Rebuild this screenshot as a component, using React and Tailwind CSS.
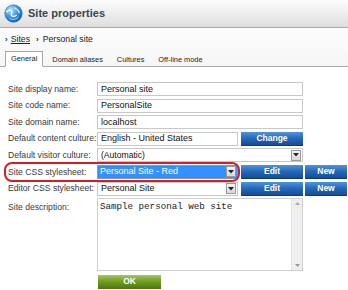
import React from "react";

const F = { fontFamily: "Arial, 'Liberation Sans', sans-serif" };

function Globe() {
  return (
    <svg width="19" height="19" viewBox="0 0 20 20">
      <defs>
        <radialGradient id="g" cx="35%" cy="30%" r="75%">
          <stop offset="0%" stopColor="#bfe6ff" />
          <stop offset="50%" stopColor="#3d9be6" />
          <stop offset="100%" stopColor="#125eb0" />
        </radialGradient>
      </defs>
      <circle cx="10" cy="10" r="9.2" fill="url(#g)" stroke="#2a6fb8" strokeWidth="0.6" />
      <path d="M3 8 C6 5, 9 7, 8 10 C7 13, 10 14, 13 12" stroke="#fff" strokeWidth="1.6" fill="none" strokeLinecap="round" opacity="0.9" />
      <path d="M11 4 C13 5, 15 6, 16 9" stroke="#fff" strokeWidth="1.3" fill="none" strokeLinecap="round" opacity="0.85" />
      <path d="M6 15 C8 17, 12 17, 15 14" stroke="#e8f6ff" strokeWidth="1" fill="none" strokeLinecap="round" opacity="0.7" />
    </svg>
  );
}

function Arrow() {
  return (
    <div className="w-[10px] h-[11px] border border-[#9a9a9a] bg-gradient-to-b from-[#f4f4f4] to-[#d8d8d8] flex items-center justify-center">
      <svg width="6" height="4" viewBox="0 0 6 4"><path d="M0 0 H6 L3 3.5 Z" fill="#222" /></svg>
    </div>
  );
}

function Btn({ children, w }) {
  return (
    <div className={`${w} h-[14px] flex items-center justify-center text-white font-bold text-[8.5px] bg-gradient-to-b from-[#4f95dc] via-[#2567b8] to-[#174d97] border-b border-[#0d3a78]`}>
      {children}
    </div>
  );
}

function Input({ value, w = "w-[206px]" }) {
  return (
    <div className={`${w} h-[14px] border border-[#c8c8c8] bg-white flex items-center pl-[3px] text-[9px] text-[#111] leading-none`}>
      {value}
    </div>
  );
}

function Row({ label, children }) {
  return (
    <div className="flex items-center h-[14px]">
      <div className="w-[89px] text-[8.6px] text-[#3a3a3a] whitespace-nowrap">{label}</div>
      {children}
    </div>
  );
}

export default function App() {
  return (
    <div className="w-[348px] h-[290px] bg-white relative overflow-hidden" style={F}>
      <div className="h-[28px] bg-gradient-to-b from-[#fdfdfd] to-[#dedede] border-b border-[#a9a9a9] flex items-center pl-[4px] gap-[5px]">
        <Globe />
        <span className="text-[11px] font-bold text-[#3b4650]">Site properties</span>
      </div>
      <div className="h-[39px] bg-gradient-to-b from-[#fcfcfc] to-[#f6f6f6] border-b border-[#a8a8a8] relative">
        <div className="flex items-center gap-[3px] pl-[5px] pt-[5px] text-[8.7px] text-[#222]">
          <span className="font-bold text-[8px]">›</span>
          <span className="underline">Sites</span>
          <span className="font-bold text-[8px] ml-[3px]">›</span>
          <span className="ml-[1px]">Personal site</span>
        </div>
        <div className="absolute left-[5px] bottom-[-1px] flex items-end text-[7.4px] text-[#222]">
          <div className="h-[16px] px-[5px] border border-[#a8a8a8] border-b-white bg-white flex items-center">General</div>
          <div className="h-[15px] pl-[9px] pr-[7px] flex items-center">Domain aliases</div>
          <div className="h-[15px] px-[7px] flex items-center">Cultures</div>
          <div className="h-[15px] px-[7px] flex items-center">Off-line mode</div>
        </div>
      </div>

      <div className="pl-[8px] pt-[15px] flex flex-col gap-[2.6px]">
        <Row label="Site display name:"><Input value="Personal site" /></Row>
        <Row label="Site code name:"><Input value="PersonalSite" /></Row>
        <Row label="Site domain name:"><Input value="localhost" /></Row>
        <Row label="Default content culture:">
          <Input value="English - United States" w="w-[141px]" />
          <div className="ml-[3px]"><Btn w="w-[62px]">Change</Btn></div>
        </Row>
        <Row label="Default visitor culture:">
          <div className="w-[206px] h-[14px] border border-[#c8c8c8] bg-white flex items-center justify-between pl-[3px] pr-[1px] text-[8.6px] text-[#111]">
            <span>(Automatic)</span>
            <Arrow />
          </div>
        </Row>
        <Row label="Site CSS stylesheet:">
          <div className="w-[141px] h-[14px] border border-[#7a9cc8] bg-[#3391ff] flex items-center justify-between pl-[2px] pr-[1px] text-[9px] text-white">
            <span className="leading-none">Personal Site - Red</span>
            <Arrow />
          </div>
          <div className="ml-[3px] flex gap-[2px]"><Btn w="w-[62px]">Edit</Btn><Btn w="w-[42px]">New</Btn></div>
        </Row>
        <Row label="Editor CSS stylesheet:">
          <div className="w-[141px] h-[14px] border border-[#c8c8c8] bg-white flex items-center justify-between pl-[3px] pr-[1px] text-[9px] text-[#111]">
            <span className="leading-none">Personal Site</span>
            <Arrow />
          </div>
          <div className="ml-[3px] flex gap-[2px]"><Btn w="w-[62px]">Edit</Btn><Btn w="w-[42px]">New</Btn></div>
        </Row>
        <div className="flex items-start">
          <div className="w-[89px] text-[8.6px] text-[#3a3a3a] pt-[3px]">Site description:</div>
          <div className="w-[206px] h-[73px] border border-[#cfcfcf] bg-white flex">
            <div className="flex-1 pl-[2px] pt-[1px] text-[9.2px] text-[#222]" style={{ fontFamily: "'Liberation Mono', 'Courier New', monospace" }}>Sample personal web site</div>
            <div className="w-[11px] bg-[#efefef] border-l border-[#e2e2e2] flex flex-col justify-between items-center py-[3px]">
              <svg width="5" height="3" viewBox="0 0 5 3"><path d="M0 3 L2.5 0 L5 3 Z" fill="#aaa" /></svg>
              <svg width="5" height="3" viewBox="0 0 5 3"><path d="M0 0 L2.5 3 L5 0 Z" fill="#999" /></svg>
            </div>
          </div>
        </div>
        <div className="pl-[90px] pt-[1px]">
          <div className="w-[63px] h-[14px] flex items-center justify-center text-white font-bold text-[8.5px] bg-gradient-to-b from-[#a2c85a] via-[#6e9a1e] to-[#4d7410]">OK</div>
        </div>
      </div>

      <div className="absolute left-[4px] top-[162px] w-[236px] h-[20px] rounded-[8px] border-2 border-[#d21f26] pointer-events-none" />
    </div>
  );
}
